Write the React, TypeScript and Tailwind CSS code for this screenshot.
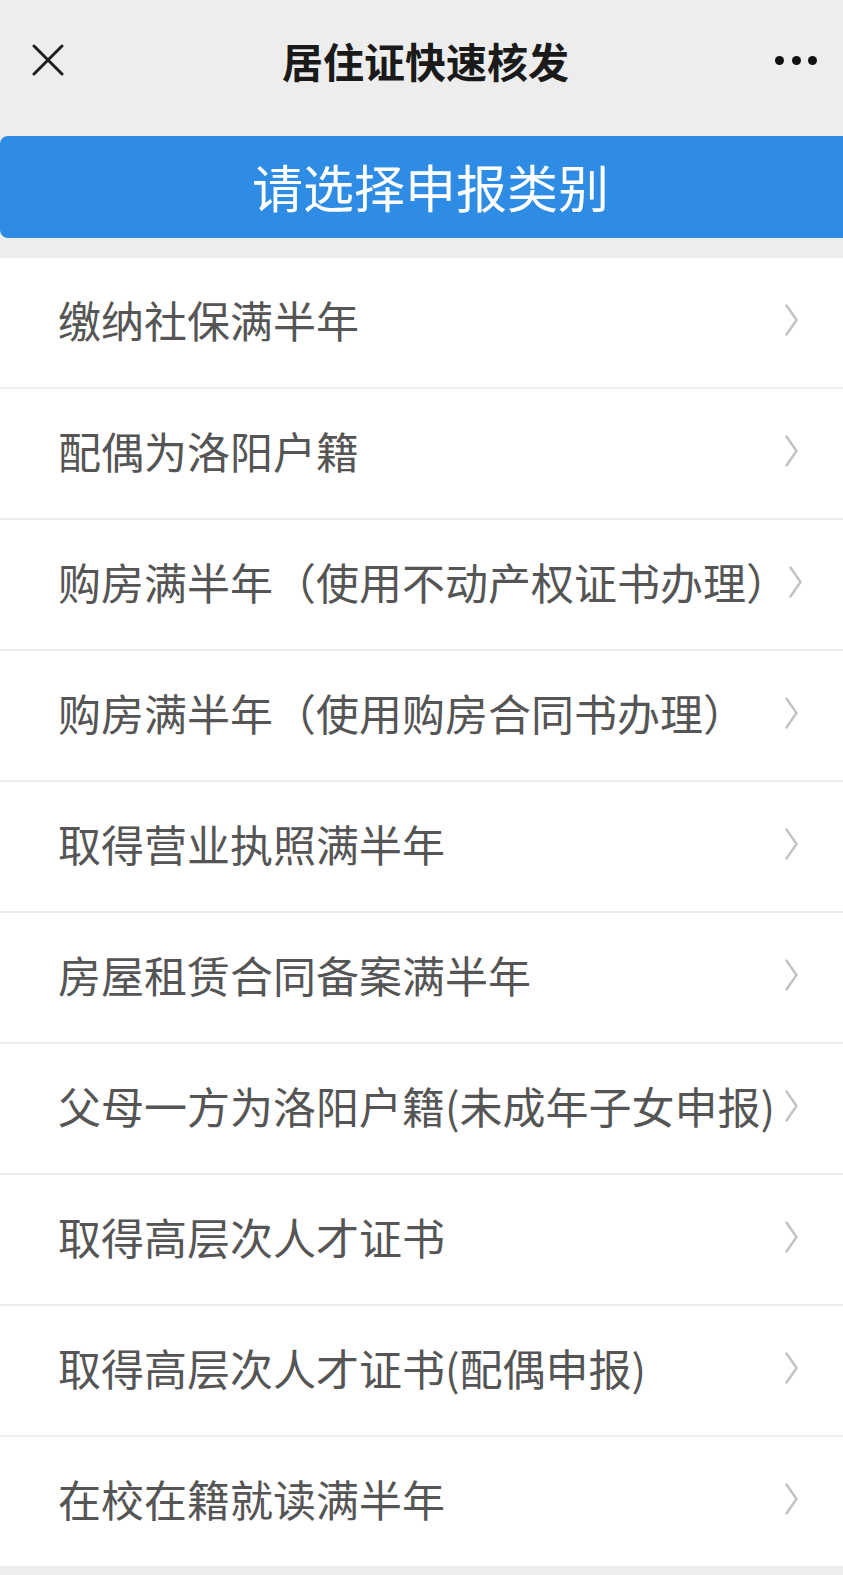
import React from 'react';

const items = [
  '缴纳社保满半年',
  '配偶为洛阳户籍',
  '购房满半年（使用不动产权证书办理）',
  '购房满半年（使用购房合同书办理）',
  '取得营业执照满半年',
  '房屋租赁合同备案满半年',
  '父母一方为洛阳户籍(未成年子女申报)',
  '取得高层次人才证书',
  '取得高层次人才证书(配偶申报)',
  '在校在籍就读满半年',
];

const font = { fontFamily: '"Noto Sans CJK SC", "Noto Sans", sans-serif' };

const Chevron = () => (
  <svg width="13" height="32" viewBox="0 0 13 32" fill="none" className="shrink-0">
    <polyline points="1.5,1.5 11.5,16 1.5,30.5" stroke="#c4c4c4" strokeWidth="2.5" strokeLinejoin="round" strokeLinecap="round" />
  </svg>
);

const App: React.FC = () => {
  return (
    <div className="w-[843px] h-[1575px] bg-[#ededed] overflow-hidden" style={font}>
      {/* top bar */}
      <header className="h-[120px] flex items-center pl-[32px] pr-[26px]">
        <svg width="32" height="32" viewBox="0 0 32 32" className="shrink-0">
          <path d="M2 2 L30 30 M30 2 L2 30" stroke="#1f1f1f" strokeWidth="3" strokeLinecap="round" />
        </svg>
        <h1 className="flex-1 text-center text-[41px] font-bold text-[#1a1a1a] leading-none pl-[12px]">居住证快速核发</h1>
        <div className="flex gap-[7.5px] items-center">
          <span className="w-[9px] h-[9px] rounded-full bg-[#111]"></span>
          <span className="w-[9px] h-[9px] rounded-full bg-[#111]"></span>
          <span className="w-[9px] h-[9px] rounded-full bg-[#111]"></span>
        </div>
      </header>

      <div className="mt-[16px] h-[102px] bg-[#2e8ce4] rounded-l-[8px] flex items-center justify-center pl-[18px] pb-[2px]">
        <span className="text-[51px] text-white leading-none">请选择申报类别</span>
      </div>

      <ul className="mt-[20px] flex flex-col gap-[2px]">
        {items.map((t) => (
          <li key={t} className="h-[129px] bg-white flex items-center justify-between pl-[58px] pr-[45px] pb-[6px]">
            <span className="text-[43px] text-[#555] whitespace-nowrap leading-none">{t}</span>
            <Chevron />
          </li>
        ))}
      </ul>
    </div>
  );
};

export default App;
